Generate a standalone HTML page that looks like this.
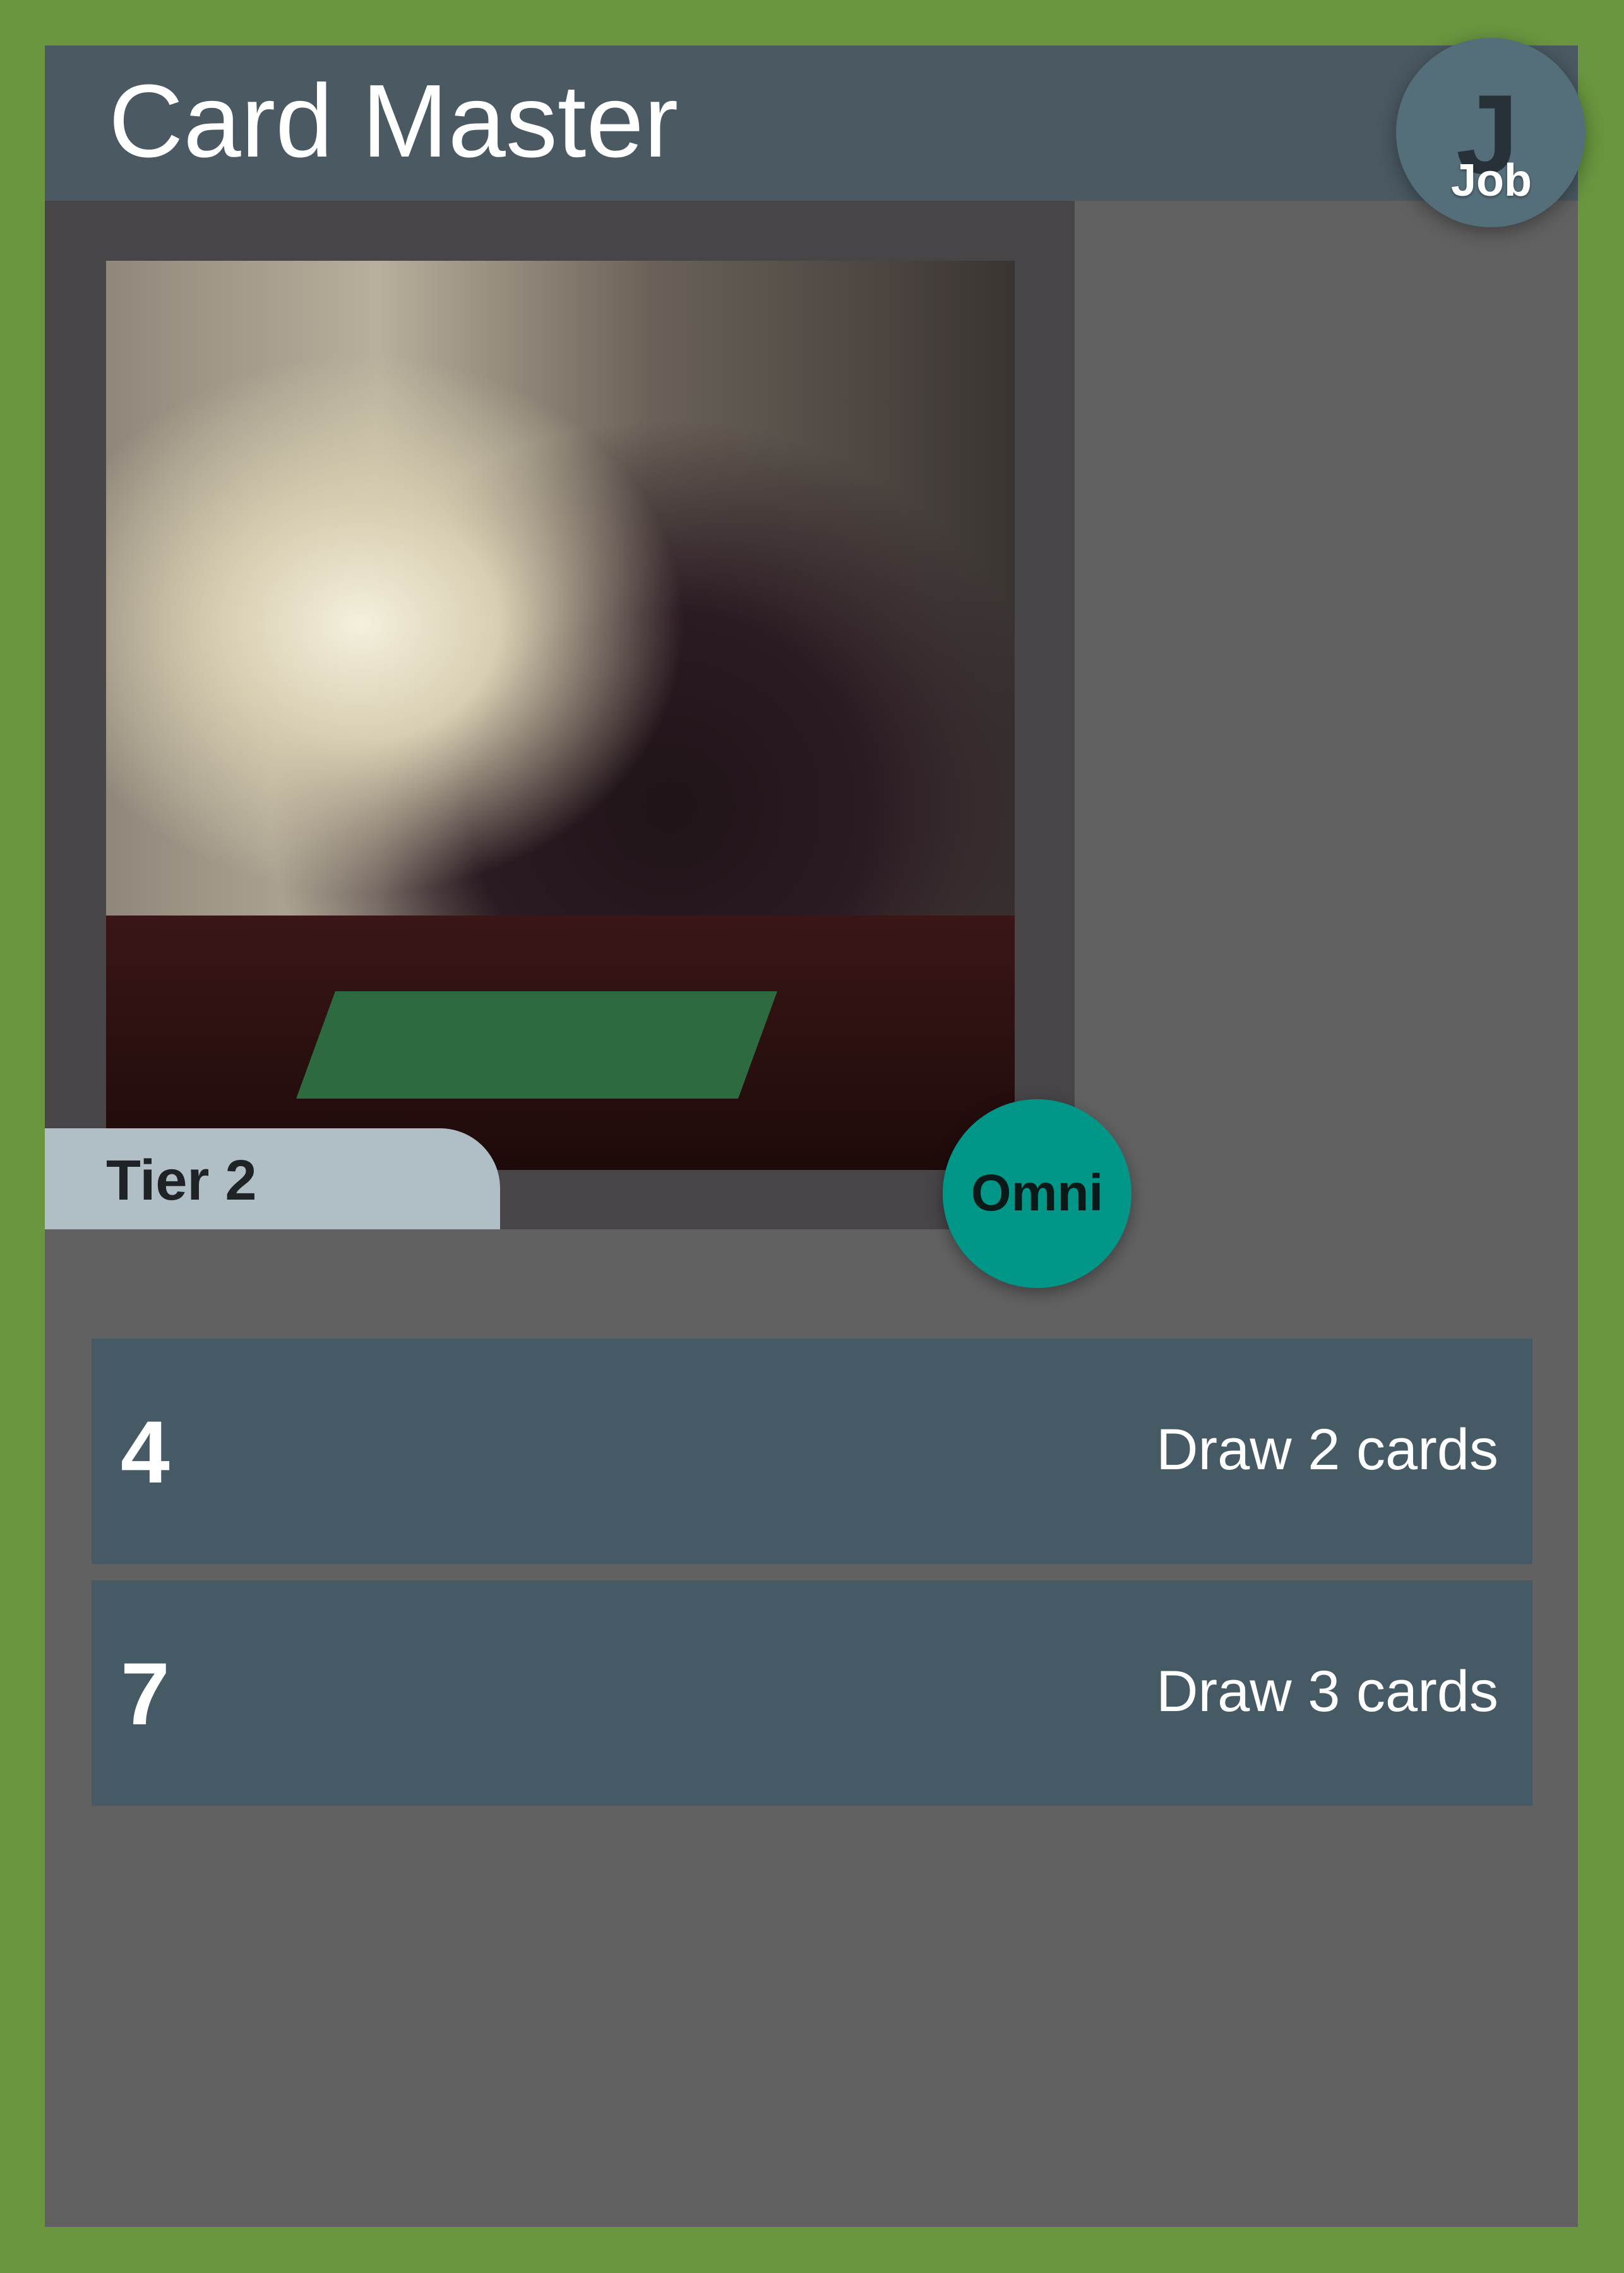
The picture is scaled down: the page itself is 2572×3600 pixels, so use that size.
<!DOCTYPE html>
<html><head><meta charset="utf-8"><style>
html,body{margin:0;padding:0}
body{width:2572px;height:3600px;background:#6a963f;position:relative;overflow:hidden;font-family:"Liberation Sans",Roboto,sans-serif}
.card{position:absolute;left:71px;top:72px;width:2428px;height:3455px;background:#616161}
.hdr{position:absolute;left:71px;top:72px;width:2428px;height:246px;background:#4a5962}
.title{position:absolute;left:172px;top:110px;font-size:164px;color:#fff;line-height:1;white-space:nowrap}
.jc{position:absolute;left:2211px;top:60px;width:300px;height:300px;border-radius:50%;background:#546e7a;box-shadow:0 8px 30px rgba(0,0,0,.35)}
.J{position:absolute;left:2306px;top:124px;font-size:178px;color:#263238;font-weight:bold;line-height:1}
.job{position:absolute;left:2298px;top:250px;font-size:72px;color:#fff;font-weight:bold;line-height:1;text-shadow:0 2px 4px rgba(0,0,0,.4)}
.panel{position:absolute;left:71px;top:318px;width:1631px;height:1629px;background:#474547}
.img{position:absolute;left:168px;top:413px;width:1439px;height:1440px;background:
radial-gradient(ellipse at 28% 40%,#f4f0dc 0%,#d8ceb2 15%,transparent 35%),
radial-gradient(ellipse at 62% 60%,#201418 0%,#2a1a22 25%,transparent 50%),
linear-gradient(90deg,#8f877a 0%,#b8b09c 30%,#6a6258 60%,#3a3432 100%)}
.table{position:absolute;left:168px;top:1450px;width:1439px;height:403px;background:linear-gradient(180deg,#3a1616,#1e0a0a)}
.felt{position:absolute;left:500px;top:1570px;width:700px;height:170px;background:#2e6a40;transform:skewX(-20deg)}
.tier{position:absolute;left:71px;top:1787px;width:721px;height:160px;background:#b0bec5;border-top-right-radius:95px}
.tier span{position:absolute;left:97px;top:32px;font-size:90px;color:#1f2326;font-weight:bold}
.omni{position:absolute;left:1493px;top:1741px;width:299px;height:299px;border-radius:50%;background:#009688;box-shadow:0 8px 24px rgba(0,0,0,.35)}
.omni span{position:absolute;width:100%;text-align:center;top:102px;font-size:82px;color:#0b1a18;font-weight:bold}
.row{position:absolute;left:145px;width:2282px;height:357px;background:#455a64}
.row .n{position:absolute;left:46px;top:110px;font-size:140px;font-weight:bold;color:#fff;line-height:1}
.row .t{position:absolute;right:54px;top:130px;font-size:92px;color:#fff;line-height:1}
</style></head><body>
<div class="card"></div>
<div class="hdr"></div>
<div class="title">Card Master</div>
<div class="panel"></div>
<div class="img"></div>
<div class="table"></div>
<div class="felt"></div>
<div class="tier"><span>Tier 2</span></div>
<div class="omni"><span>Omni</span></div>
<div class="row" style="top:2120px"><div class="n">4</div><div class="t">Draw 2 cards</div></div>
<div class="row" style="top:2503px"><div class="n">7</div><div class="t">Draw 3 cards</div></div>
<div class="jc"></div>
<div class="J">J</div>
<div class="job">Job</div>
</body></html>
